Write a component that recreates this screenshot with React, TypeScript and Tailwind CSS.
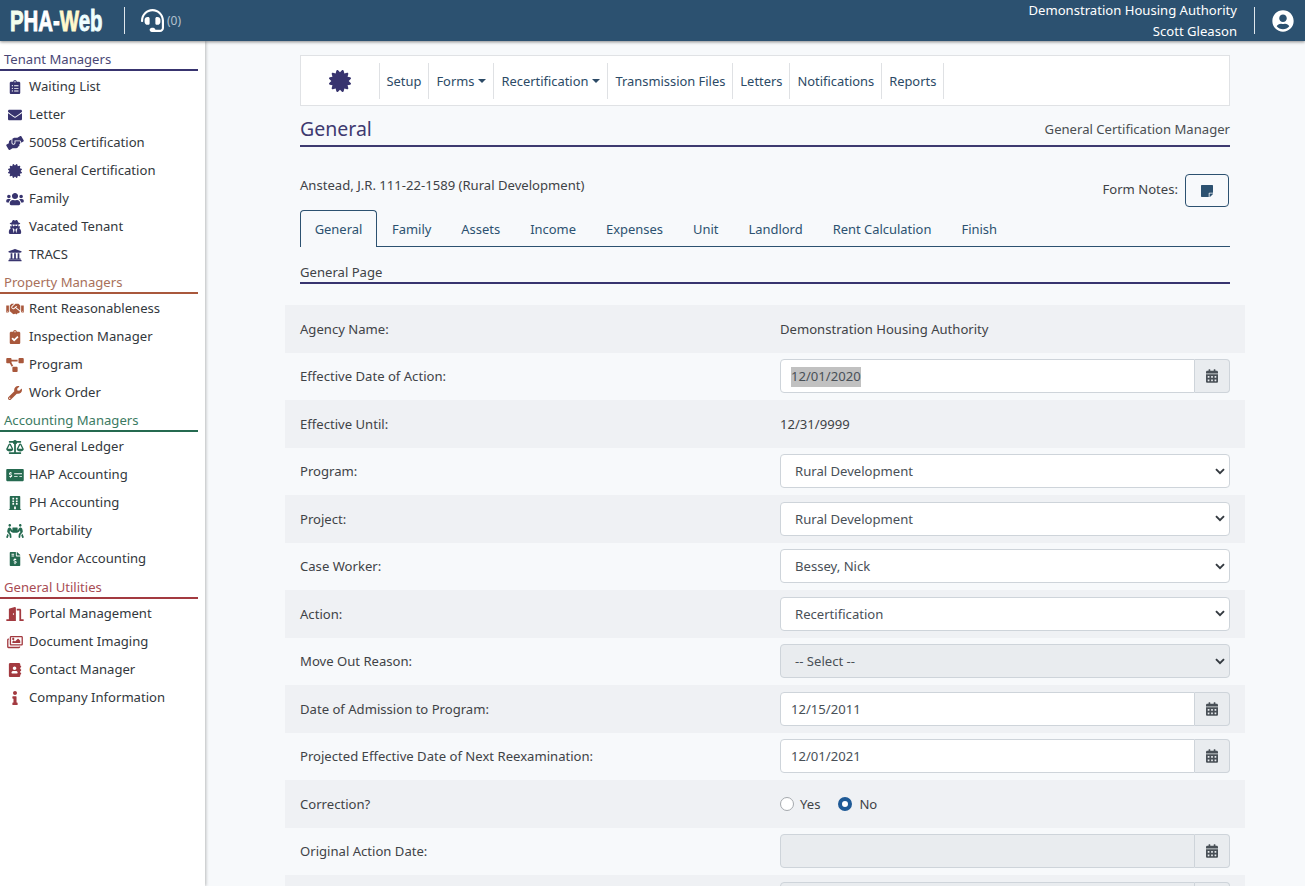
import React from "react";
import {
  FaClipboardList, FaEnvelope, FaHandsHelping, FaCertificate, FaUsers, FaUserSecret, FaUniversity,
  FaHandshake, FaClipboardCheck, FaProjectDiagram, FaWrench, FaBalanceScale, FaMoneyCheckAlt, FaBuilding,
  FaPeopleCarry, FaFileInvoiceDollar, FaDoorOpen, FaRegImages, FaAddressBook, FaInfo, FaCalendarAlt,
  FaStickyNote, FaUserCircle, FaHeadset,
} from "react-icons/fa";

const N = "w-[14px]";
const W = "w-[18px]";

const groups = [
  { title: "Tenant Managers", text: "text-[#4a4775]", line: "border-[#38346f]", icon: "text-[#38346f]", space: "pb-[4px]", top: "pt-[2px]", items: [
    ["Waiting List", FaClipboardList, N], ["Letter", FaEnvelope, N], ["50058 Certification", FaHandsHelping, W], ["General Certification", FaCertificate, N], ["Family", FaUsers, W], ["Vacated Tenant", FaUserSecret, N], ["TRACS", FaUniversity, N],
  ] },
  { title: "Property Managers", text: "text-[#a8705a]", line: "border-[#a9583c]", icon: "text-[#a9583c]", space: "pb-[4px]", top: "pt-[1px]", items: [
    ["Rent Reasonableness", FaHandshake, W], ["Inspection Manager", FaClipboardCheck, N], ["Program", FaProjectDiagram, W], ["Work Order", FaWrench, N],
  ] },
  { title: "Accounting Managers", text: "text-[#3b7a62]", line: "border-[#256a50]", icon: "text-[#256a50]", space: "pb-[5px]", top: "pt-[1px]", items: [
    ["General Ledger", FaBalanceScale, W], ["HAP Accounting", FaMoneyCheckAlt, W], ["PH Accounting", FaBuilding, N], ["Portability", FaPeopleCarry, W], ["Vendor Accounting", FaFileInvoiceDollar, N],
  ] },
  { title: "General Utilities", text: "text-[#a84c54]", line: "border-[#a33a40]", icon: "text-[#a33a40]", space: "pb-[4px]", top: "pt-[1px]", items: [
    ["Portal Management", FaDoorOpen, W], ["Document Imaging", FaRegImages, W], ["Contact Manager", FaAddressBook, N], ["Company Information", FaInfo, N],
  ] },
] as const;

function DateField({ value, disabled, selected }: { value?: string; disabled?: boolean; selected?: boolean }) {
  return (
    <div className="flex w-full">
      <div className={`flex h-[34px] flex-1 items-center rounded-l border border-[#ced4da] px-[10px] pt-[2px] text-[#495057] ${disabled ? "bg-[#e9ecef]" : "bg-white"}`}>
        <span className={selected ? "bg-[#c1c1c1]" : ""}>{value}</span>
      </div>
      <div className="flex h-[34px] w-[35px] items-center justify-center rounded-r border border-l-0 border-[#ced4da] bg-[#e9ecef] text-[#495057]">
        <FaCalendarAlt className="h-[14px] w-[12px]" />
      </div>
    </div>
  );
}

function SelectField({ value, disabled }: { value: string; disabled?: boolean }) {
  return (
    <div className={`flex h-[34px] w-full items-center justify-between rounded border border-[#ced4da] pl-[14px] pr-[4px] text-[#495057] ${disabled ? "bg-[#e9ecef]" : "bg-white"}`}>
      <span className="pt-[2px]">{value}</span>
      <svg width="10" height="7" viewBox="0 0 12 8" fill="none" stroke="#343a40" strokeWidth="2.3">
        <path d="M1.2 1.2L6 6L10.8 1.2" />
      </svg>
    </div>
  );
}

const rows: [string, React.ReactNode][] = [
  ["Agency Name:", <span className="block pt-[2px]">Demonstration Housing Authority</span>],
  ["Effective Date of Action:", <DateField value="12/01/2020" selected />],
  ["Effective Until:", <span className="block pt-[2px]">12/31/9999</span>],
  ["Program:", <SelectField value="Rural Development" />],
  ["Project:", <SelectField value="Rural Development" />],
  ["Case Worker:", <SelectField value="Bessey, Nick" />],
  ["Action:", <SelectField value="Recertification" />],
  ["Move Out Reason:", <SelectField value="-- Select --" disabled />],
  ["Date of Admission to Program:", <DateField value="12/15/2011" />],
  ["Projected Effective Date of Next Reexamination:", <DateField value="12/01/2021" />],
  ["Correction?", (
    <div className="flex items-center">
      <span className="h-[14px] w-[14px] rounded-full border border-[#a5a9ad] bg-white" />
      <span className="ml-[6px] pt-[2px]">Yes</span>
      <span className="ml-[18px] h-[14px] w-[14px] rounded-full border-[4px] border-[#1f5a96] bg-white" />
      <span className="ml-[7px] pt-[2px]">No</span>
    </div>
  )],
  ["Original Action Date:", <DateField disabled />],
  ["", <DateField disabled />],
];

const navItems = ["Setup", "Forms", "Recertification", "Transmission Files", "Letters", "Notifications", "Reports"];
const tabs = ["Family", "Assets", "Income", "Expenses", "Unit", "Landlord", "Rent Calculation", "Finish"];

export default function App() {
  return (
    <div className="flex h-screen flex-col overflow-hidden bg-[#f7f9fb] text-[13.1px] text-[#3f4347]" style={{ fontFamily: '"Noto Sans", sans-serif' }}>
      <header className="relative z-20 flex h-[41px] shrink-0 items-center justify-between bg-[#2c5170] shadow-[0_1px_3px_rgba(0,0,0,0.45)]">
        <div className="flex items-center">
          <span className="ml-[10px] inline-block w-[95px] origin-left scale-x-[0.68] whitespace-nowrap text-[30px] font-bold leading-none text-white [-webkit-text-stroke:0.9px_currentColor]" style={{ fontFamily: '"Liberation Sans", sans-serif' }}>
            <span className="text-[#f2ffee]">P</span>HA-<span className="text-[#fff8cc]">W</span><span className="text-[#eefeff]">eb</span>
          </span>
          <span className="ml-[19px] h-[27px] w-px bg-[#dfe6ec]" />
          <FaHeadset className="ml-[16px] h-[23px] w-[23px] text-white" />
          <span className="ml-[3px] text-[12px] text-[#b4c2cf]">(0)</span>
        </div>
        <div className="flex items-center">
          <div className="text-right leading-[21px] text-white">
            <div>Demonstration Housing Authority</div>
            <div>Scott Gleason</div>
          </div>
          <span className="ml-[17px] h-[27px] w-px bg-[#dfe6ec]" />
          <FaUserCircle className="ml-[17px] mr-[11px] h-[22px] w-[22px] text-white" />
        </div>
      </header>
      <div className="flex min-h-0 flex-1">
        <aside className="z-10 w-[205px] shrink-0 bg-white pt-[9px] shadow-[1px_0_3px_rgba(0,0,0,0.25)]">
          {groups.map((g) => (
            <div key={g.title} className={g.space}>
              <div className={`mr-[7px] h-[21px] border-b-2 pl-[4px] leading-[18px] ${g.text} ${g.line}`}>{g.title}</div>
              <div className={g.top}>
                {g.items.map(([label, Icon, size]) => (
                  <div key={label} className="flex h-[28px] items-center text-[#33383d]">
                    <span className={`flex w-[29px] justify-center ${g.icon}`}>
                      <Icon className={`h-[14px] ${size}`} />
                    </span>
                    <span>{label}</span>
                  </div>
                ))}
              </div>
            </div>
          ))}
        </aside>
        <main className="min-w-0 flex-1 pl-[80px] pr-[60px] pt-[14px]">
          <div className="mx-[15px] flex h-[51px] items-center border border-[#e0e2e5] bg-white text-[12.9px]">
            <div className="flex w-[77.5px] justify-center">
              <FaCertificate className="h-[22px] w-[22px] text-[#38346f]" />
            </div>
            {navItems.map((n) => (
              <div key={n} className="flex h-[36px] items-center border-l border-[#dfe1e4] px-[7px] pt-[2px] text-[#2c4a66]">
                {n}
                {(n === "Forms" || n === "Recertification") && <span className="mb-[2px] ml-[4px] h-0 w-0 border-x-[4px] border-t-[4px] border-x-transparent border-t-[#2c4a66]" />}
              </div>
            ))}
            <div className="h-[36px] border-l border-[#dfe1e4]" />
          </div>
          <div className="mx-[15px] mt-[10px] flex h-[31px] items-center justify-between border-b-2 border-[#3e3a70] pb-[4px]">
            <span className="text-[19.5px] text-[#3e3a70]">General</span>
            <span className="pt-[2px] text-[#4a4e52]">General Certification Manager</span>
          </div>
          <div className="mx-[15px] mt-[27px] flex h-[36px] items-start justify-between">
            <span className="mt-[2px]">Anstead, J.R. 111-22-1589 (Rural Development)</span>
            <div className="flex items-center">
              <span className="mb-[1px]">Form Notes:</span>
              <span className="ml-[7px] mr-[1px] flex h-[33px] w-[44px] items-center justify-center rounded border border-[#2c5170]">
                <FaStickyNote className="h-[14px] w-[12px] text-[#2c5170]" />
              </span>
            </div>
          </div>
          <div className="mx-[15px] flex h-[37px] items-end border-b border-[#2c5170] text-[12.95px]">
            <div className="-mb-px flex h-[37px] w-[77px] items-center justify-center rounded-t border border-b-0 border-[#2c5170] bg-[#f7f9fb] pt-[2px] text-[#2c5170]">General</div>
            {tabs.map((t) => (
              <div key={t} className="flex h-[36px] items-center px-[15px] pt-[4px] text-[#2c5170]">{t}</div>
            ))}
          </div>
          <div className="mx-[15px] mt-[14px] h-[23px] border-b-2 border-[#38346f] leading-[22px]">General Page</div>
          <div className="mt-[21px]">
            {rows.map(([label, field], i) => (
              <div key={i} className={`flex h-[47.5px] items-center px-[15px] ${i % 2 === 0 ? "bg-[#eff1f4]" : ""}`}>
                <div className="w-[480px] shrink-0 pt-[2px]">{label}</div>
                <div className="flex-1">{field}</div>
              </div>
            ))}
          </div>
        </main>
      </div>
    </div>
  );
}
